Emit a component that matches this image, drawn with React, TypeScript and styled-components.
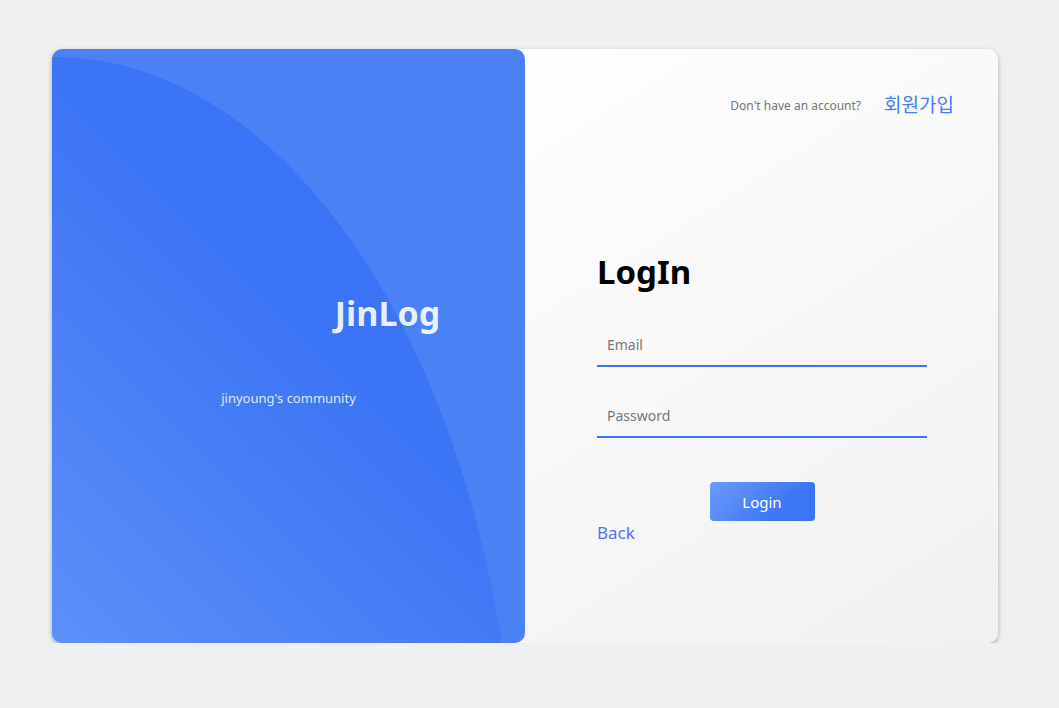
import styled, {createGlobalStyle} from "styled-components";

const GlobalStyle = createGlobalStyle`
    body {
        margin: 0;
        background: #eff0f2;
        font-family: "Noto Sans", "Noto Sans CJK KR", sans-serif;
    }
    * {
        box-sizing: border-box;
    }
`

export default function App() {
    return <Page>
        <GlobalStyle/>
        <Card>
            <Intro>
                <Logo>JinLog</Logo>
                <Slogan>jinyoung's community</Slogan>
            </Intro>
            <FormSide>
                <SignUpRow>
                    <SignUpHint>Don't have an account?</SignUpHint>
                    <SignUpLink href="#">회원가입</SignUpLink>
                </SignUpRow>
                <Form onSubmit={e => e.preventDefault()}>
                    <Title>LogIn</Title>
                    <Field type="email" placeholder="Email"/>
                    <Field type="password" placeholder="Password"/>
                    <SubmitButton type="submit">Login</SubmitButton>
                    <BackLink href="#">Back</BackLink>
                </Form>
            </FormSide>
        </Card>
    </Page>
}

const Page = styled.div`
    padding: 49px 61px 0 52px;
`

const Card = styled.div`
    display: grid;
    grid-template-columns: 473px 1fr;
    width: 946px;
    height: 594px;
    border-radius: 10px;
    background: linear-gradient(to bottom right, #ffffff 20%, #f0f1f2);
    box-shadow: 0 2px 5px rgba(0, 0, 0, 0.3);
`

const Intro = styled.section`
    position: relative;
    overflow: hidden;
    display: flex;
    flex-direction: column;
    align-items: center;
    padding-top: 244px;
    border-radius: 10px;
    background: #4a82f6;

    &::before {
        content: "";
        position: absolute;
        left: -460px;
        top: 8px;
        width: 926px;
        height: 1586px;
        border-radius: 50%;
        background: linear-gradient(45deg, #5c90f8 0%, #3b74f5 55%, #3a72f5 100%) 460px 0 / 466px 586px no-repeat;
    }
`

const Logo = styled.h1`
    position: relative;
    margin: 0 0 0 198px;
    font-size: 34px;
    line-height: 40px;
    font-weight: 700;
    color: rgba(255, 255, 255, 0.88);
`

const Slogan = styled.p`
    position: relative;
    margin: 56px 0 0;
    font-size: 13px;
    line-height: 18px;
    color: rgba(255, 255, 255, 0.82);
`

const FormSide = styled.section`
    display: flex;
    flex-direction: column;
    padding: 44px 44px 0 72px;
`

const SignUpRow = styled.div`
    display: flex;
    justify-content: flex-end;
    align-items: center;
    gap: 23px;
`

const SignUpHint = styled.span`
    font-size: 12px;
    color: #777;
`

const SignUpLink = styled.a`
    font-size: 19px;
    line-height: 24px;
    color: #4a7cf4;
    text-decoration: none;
`

const Form = styled.form`
    display: flex;
    flex-direction: column;
    width: 330px;
    margin-top: 133px;
`

const Title = styled.h2`
    margin: 0 0 29px;
    font-size: 33px;
    line-height: 44px;
    font-weight: 700;
    color: #000;
`

const Field = styled.input`
    height: 44px;
    margin-bottom: 27px;
    padding: 0 10px;
    border: none;
    border-bottom: 2px solid #3b76f6;
    background: transparent;
    font-family: inherit;
    font-size: 14px;
    outline: none;

    &::placeholder {
        color: #777;
    }
`

const SubmitButton = styled.button`
    align-self: center;
    width: 105px;
    height: 39px;
    margin-top: 17px;
    border: none;
    border-radius: 4px;
    background: linear-gradient(135deg, #6c9cf8, #3b76f5 70%);
    font-family: inherit;
    font-size: 15px;
    color: #fff;
    cursor: pointer;
`

const BackLink = styled.a`
    align-self: flex-start;
    font-size: 17px;
    line-height: 24px;
    color: #5d6ef2;
    text-decoration: none;
`
